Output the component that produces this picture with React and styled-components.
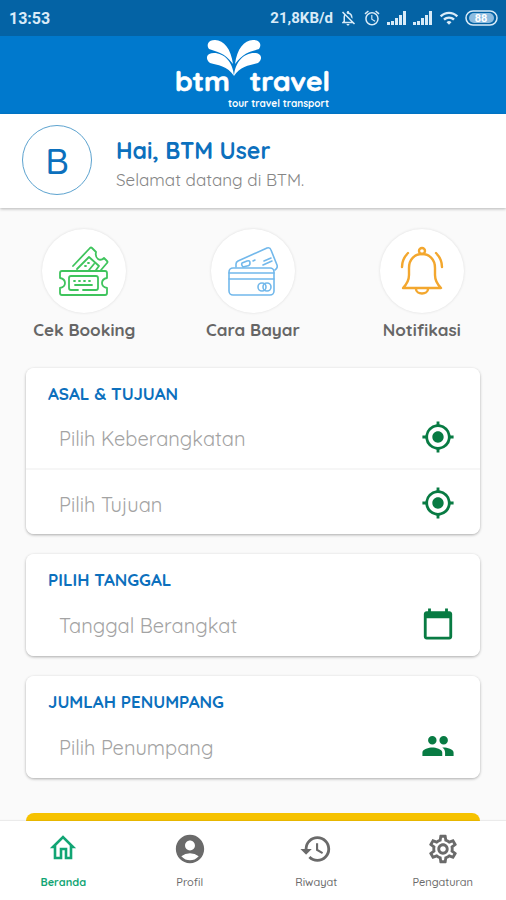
import React from 'react'
import styled, { createGlobalStyle } from 'styled-components'
import {
  MdAccountCircle,
  MdAlarm,
  MdCalendarToday,
  MdGpsFixed,
  MdHistory,
  MdOutlineNotificationsOff,
  MdOutlineSettings,
  MdPeople,
  MdWifi
} from 'react-icons/md'

const GlobalStyle = createGlobalStyle`
  * {
    box-sizing: border-box;
  }
  body {
    margin: 0;
    background: #fafafa;
    font-family: Quicksand, Lato, 'Open Sans', sans-serif;
  }
`
const Screen = styled.div`
  display: flex;
  flex-direction: column;
  height: 100vh;
`
const StatusBar = styled.div`
  display: flex;
  flex: none;
  align-items: center;
  justify-content: space-between;
  height: 36px;
  padding: 0 8px 0 9px;
  background: #0463a5;
  color: #d9ebf8;
  font-family: Roboto, sans-serif;
  font-size: 16px;
  font-weight: 700;
`
const StatusGroup = styled.div`
  display: flex;
  align-items: center;
  gap: 6px;
  font-size: 15px;
`
const Header = styled.header`
  display: flex;
  flex: none;
  justify-content: center;
  height: 78px;
  padding-top: 4px;
  background: #0079cd;
`
const Greeting = styled.section`
  display: flex;
  flex: none;
  align-items: center;
  gap: 24px;
  height: 94px;
  padding: 0 22px 2px;
  background: #fff;
  box-shadow: 0 1px 3px rgba(0, 0, 0, 0.28);
`
const Avatar = styled.div`
  display: flex;
  align-items: center;
  justify-content: center;
  width: 70px;
  height: 70px;
  border: 1px solid #5da3cf;
  border-radius: 50%;
  color: #0c70bd;
  font-size: 36px;
  font-weight: 500;
`
const GreetingText = styled.div`
  padding-top: 8px;
`
const Name = styled.h1`
  margin: 0;
  color: #0c70bd;
  font-size: 23px;
  font-weight: 700;
  line-height: 32px;
`
const Welcome = styled.p`
  margin: 0;
  color: #858585;
  font-size: 17px;
  line-height: 26px;
`
const Content = styled.main`
  flex: 1;
  min-height: 0;
  overflow-y: auto;
  scrollbar-width: none;
`
const Shortcuts = styled.nav`
  display: grid;
  grid-template-columns: repeat(3, 1fr);
  padding-top: 21px;
`
const Shortcut = styled.a`
  display: flex;
  flex-direction: column;
  align-items: center;
  gap: 6px;
  color: #666;
  font-size: 17px;
  font-weight: 700;
  line-height: 22px;
  text-decoration: none;
`
const Circle = styled.span`
  display: flex;
  align-items: center;
  justify-content: center;
  width: 84px;
  height: 84px;
  border-radius: 50%;
  background: #fff;
  box-shadow: 0 0 3px rgba(0, 0, 0, 0.12);
  color: ${props => props.$color};
`
const Form = styled.form`
  display: flex;
  flex-direction: column;
  gap: 20px;
  padding: 27px 26px 24px;
`
const Card = styled.fieldset`
  min-width: 0;
  margin: 0;
  padding: 14px 0 0;
  border: 0;
  border-radius: 8px;
  background: #fff;
  box-shadow: 0 1px 3px rgba(0, 0, 0, 0.32);
`
const CardTitle = styled.h2`
  margin: 0;
  padding: 0 22px;
  color: #0c70bd;
  font-size: 17px;
  font-weight: 700;
  line-height: 24px;
`
const Field = styled.label`
  display: flex;
  align-items: center;
  gap: 12px;
  height: 64px;
  padding: 0 25px 0 33px;
  color: #087b43;

  &:not(:last-child) {
    height: 62px;
  }
  & + & {
    height: 66px;
    padding-top: 2px;
    border-top: 2px solid #f6f6f6;
  }
`
const FieldInput = styled.input`
  flex: 1;
  min-width: 0;
  padding: 2px 0 0;
  border: 0;
  outline: 0;
  background: transparent;
  color: #606060;
  font-family: inherit;
  font-size: 20px;

  &::placeholder {
    color: #a3a3a3;
    opacity: 1;
  }
`
const SearchButton = styled.button`
  height: 52px;
  margin-top: 15px;
  border: 0;
  border-radius: 8px;
  background: #f6c200;
`
const TabBar = styled.nav`
  display: grid;
  flex: none;
  grid-template-columns: repeat(4, 1fr);
  height: 79px;
  padding-top: 11px;
  background: #fff;
  box-shadow: 0 -1px 1px rgba(0, 0, 0, 0.06);
`
const Tab = styled.a`
  display: flex;
  flex-direction: column;
  align-items: center;
  gap: 6px;
  color: ${props => (props.$active ? '#12a574' : '#6a6a6a')};
  font-size: 11px;
  font-weight: ${props => (props.$active ? 700 : 500)};
  line-height: 20px;
  text-decoration: none;
`

const Logo = () => (
  <svg
    width='154'
    height='72'
    viewBox='0 0 154 72'
    fill='#fff'
    fontFamily='Quicksand, Lato, sans-serif'
    fontWeight='700'
    role='img'
    aria-label='btm travel'
  >
    <path d='M57 24C55 9 48 0 39 0c-7 0-9 5-6 9 8 3 15 3 24 15z' />
    <path d='M58 36C57 22 48 13 38 13c-8 0-9 6-4 10 7 2 18 3 24 13z' />
    <path d='M59 24C61 9 68 0 77 0c7 0 9 5 6 9-8 3-15 3-24 15z' />
    <path d='M58 36C59 22 68 13 78 13c8 0 9 6 4 10-7 2-18 3-24 13z' />
    <g fontSize='28' stroke='#fff' strokeWidth='0.6'>
      <text x='-1' y='51'>
        btm
      </text>
      <text x='154' y='51' textAnchor='end'>
        travel
      </text>
    </g>
    <text x='153' y='67' textAnchor='end' fontSize='10'>
      tour travel transport
    </text>
  </svg>
)

const SignalIcon = () => (
  <svg width='20' height='16' viewBox='0 0 20 16' fill='currentColor'>
    <path d='M0 12h3v3H0zM4 11h3v4H4zM8 8h3v7H8zM12 5h3v10h-3zM16 1h3v14h-3z' />
  </svg>
)

const BatteryIcon = () => (
  <svg width='33' height='16' viewBox='0 0 33 16'>
    <rect x='1' y='1' width='31' height='14' rx='7' fill='none' stroke='currentColor' strokeWidth='1.5' />
    <rect x='4' y='3' width='25' height='10' rx='5' fill='#8dbce0' />
    <text x='16' y='12' textAnchor='middle' fill='#fff' fontSize='11' fontWeight='700'>
      88
    </text>
  </svg>
)

const TicketIcon = () => (
  <svg
    width='50'
    height='50'
    viewBox='0 0 50 50'
    fill='none'
    stroke='currentColor'
    strokeWidth='1.8'
    strokeLinejoin='round'
    strokeLinecap='round'
  >
    <path d='M3 25h43q2 0 2 2v5q-5 1-5 5t5 5v5q0 2-2 2H3q-2 0-2-2v-5q5-1 5-5t-5-5v-5q0-2 2-2z' />
    <path d='M19 44h-7q-2 0-2-2V32q0-2 2-2h25q2 0 2 2v10q0 2-2 2H24' />
    <path d='M16 39h17' />
    <path d='M15 35h20' strokeDasharray='1 4' />
    <path d='M14 20 31 2q1-1 2 0l4 4q-1 5 2 7 3 2 6-1l3 3q1 1 0 2l-6 7' />
    <path d='M18 23 30 11l10 9-3 4M30 24l5-6' />
    <path d='M26 20h1M29 17h1' />
  </svg>
)

const CardsIcon = () => (
  <svg
    width='50'
    height='50'
    viewBox='0 0 50 50'
    fill='none'
    stroke='currentColor'
    strokeWidth='1.6'
    strokeLinejoin='round'
    strokeLinecap='round'
  >
    <rect x='1' y='22' width='45' height='27' rx='4' />
    <path d='M1 27h45M1 33h45' />
    <circle cx='34' cy='41' r='4' />
    <circle cx='39' cy='41' r='4' />
    <path d='M8 21v-3q0-2 2-3L39 2q3-1 4 2l6 15q1 3-2 5' />
    <path d='m14 17 5-2q3-1 3 2t-3 3l-4 1q-2-2-1-4zM25 15l2-1M36 15l7-3M35 19l9-4' />
  </svg>
)

const BellIcon = () => (
  <svg
    width='48'
    height='50'
    viewBox='0 0 48 50'
    fill='none'
    stroke='currentColor'
    strokeWidth='2.4'
    strokeLinejoin='round'
    strokeLinecap='round'
  >
    <circle cx='24' cy='5' r='3' />
    <path d='M11 22C11 13 17 8 24 8s13 5 13 14v7c0 6 3 10 6 13H5c3-3 6-7 6-13z' />
    <path d='M18 43c0 6 12 6 12 0M10 7Q4 13 4 21M38 7q6 6 6 14' />
  </svg>
)

const HomeIcon = ({ size }) => (
  <svg width={size} height={size} viewBox='0 0 34 34' fill='none' stroke='currentColor' strokeWidth='2.6'>
    <path d='M7 15 17 5l10 10h-2v11h-5v-9h-5v9H9V15z' />
  </svg>
)

const shortcuts = [
  { label: 'Cek Booking', color: '#3fc45d', icon: <TicketIcon /> },
  { label: 'Cara Bayar', color: '#72b8eb', icon: <CardsIcon /> },
  { label: 'Notifikasi', color: '#f3a72e', icon: <BellIcon /> }
]

const cards = [
  {
    title: 'ASAL & TUJUAN',
    fields: [
      { placeholder: 'Pilih Keberangkatan', Icon: MdGpsFixed },
      { placeholder: 'Pilih Tujuan', Icon: MdGpsFixed }
    ]
  },
  {
    title: 'PILIH TANGGAL',
    fields: [{ placeholder: 'Tanggal Berangkat', Icon: MdCalendarToday }]
  },
  {
    title: 'JUMLAH PENUMPANG',
    fields: [{ placeholder: 'Pilih Penumpang', Icon: MdPeople }]
  }
]

const tabs = [
  { label: 'Beranda', Icon: HomeIcon, active: true },
  { label: 'Profil', Icon: MdAccountCircle },
  { label: 'Riwayat', Icon: MdHistory },
  { label: 'Pengaturan', Icon: MdOutlineSettings }
]

const App = () => (
  <Screen>
    <GlobalStyle />
    <StatusBar>
      <span>13:53</span>
      <StatusGroup>
        <span>21,8KB/d</span>
        <MdOutlineNotificationsOff size={18} />
        <MdAlarm size={18} />
        <SignalIcon />
        <SignalIcon />
        <MdWifi size={20} />
        <BatteryIcon />
      </StatusGroup>
    </StatusBar>
    <Header>
      <Logo />
    </Header>
    <Greeting>
      <Avatar>B</Avatar>
      <GreetingText>
        <Name>Hai, BTM User</Name>
        <Welcome>Selamat datang di BTM.</Welcome>
      </GreetingText>
    </Greeting>
    <Content>
      <Shortcuts>
        {shortcuts.map(({ label, color, icon }) => (
          <Shortcut key={label} href='#'>
            <Circle $color={color}>{icon}</Circle>
            {label}
          </Shortcut>
        ))}
      </Shortcuts>
      <Form>
        {cards.map(({ title, fields }) => (
          <Card key={title} aria-label={title}>
            <CardTitle>{title}</CardTitle>
            {fields.map(({ placeholder, Icon }) => (
              <Field key={placeholder}>
                <FieldInput placeholder={placeholder} aria-label={placeholder} />
                <Icon size={34} />
              </Field>
            ))}
          </Card>
        ))}
        <SearchButton type='button' aria-label='Cari' />
      </Form>
    </Content>
    <TabBar>
      {tabs.map(({ label, Icon, active }) => (
        <Tab key={label} href='#' $active={active}>
          <Icon size={34} />
          {label}
        </Tab>
      ))}
    </TabBar>
  </Screen>
)

export default App
